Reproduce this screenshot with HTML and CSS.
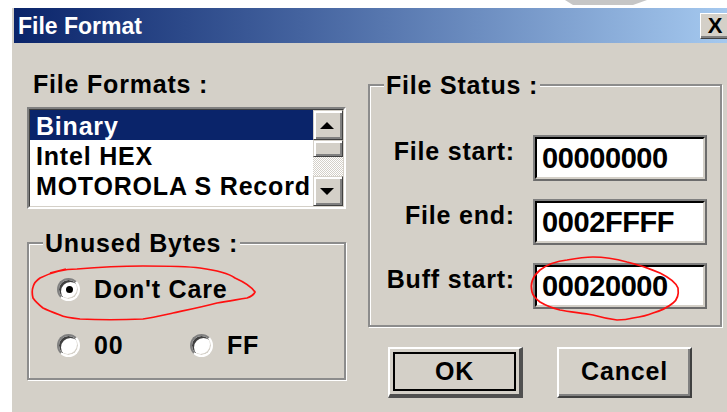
FILE: index.html
```html
<!DOCTYPE html>
<html lang="en">
<head>
<meta charset="utf-8">
<title>File Format</title>
<link rel="stylesheet" href="styles.css">
</head>
<body>
  <div class="backdrop">
    <svg width="90" height="8" viewBox="0 0 90 8"><polygon points="0,0 82,0 68,5 8,5" fill="#c6c6c6"/></svg>
  </div>

  <div class="window">
    <div class="titlebar">
      <span class="title">File Format</span>
      <span class="close">X</span>
    </div>

    <div class="content">
      <div class="col-left">
        <div class="label">File Formats :</div>
        <div class="listbox">
          <div class="listbox-inner">
            <ul class="items">
              <li class="sel">Binary</li>
              <li>Intel HEX</li>
              <li>MOTOROLA S Record</li>
            </ul>
            <div class="scrollbar">
              <div class="sb-btn"><i class="arrow-up"></i></div>
              <div class="sb-thumb"></div>
              <div class="sb-track"></div>
              <div class="sb-btn"><i class="arrow-down"></i></div>
            </div>
          </div>
        </div>

        <fieldset class="group unused">
          <legend>Unused Bytes :</legend>
          <div class="radio-row first">
            <label class="radio"><span class="circle checked"></span>Don't Care</label>
          </div>
          <div class="radio-row second">
            <label class="radio wide"><span class="circle"></span>00</label>
            <label class="radio"><span class="circle"></span>FF</label>
          </div>
        </fieldset>
      </div>

      <div class="col-right">
        <fieldset class="group status">
          <legend>File Status :</legend>
          <div class="field">
            <span class="flabel">File start:</span>
            <div class="edit"><div class="edit-inner">00000000</div></div>
          </div>
          <div class="field">
            <span class="flabel">File end:</span>
            <div class="edit"><div class="edit-inner">0002FFFF</div></div>
          </div>
          <div class="field">
            <span class="flabel">Buff start:</span>
            <div class="edit"><div class="edit-inner">00020000</div></div>
          </div>
        </fieldset>

        <div class="buttons">
          <div class="btn default"><div class="btn-face">OK</div></div>
          <div class="btn"><div class="btn-face">Cancel</div></div>
        </div>
      </div>
    </div>
  </div>

  <!-- hand-drawn red marks over the selected option and the buffer address -->
  <svg class="marks" width="727" height="412" viewBox="0 0 727 412">
    <path d="M40 278 C52 272 64 269 77 269 C100 267 120 266 143 266 C165 266 185 266 200 268 C215 270 228 273 235 278 C244 282 251 286 255 292 C253 296 250 297 247 298 C235 300 228 301 217 303 C202 307 187 310 173 313 C160 316 152 318 143 319 C120 320 100 320 80 319 C70 318 64 317 60 315 C52 312 47 310 43 308 C38 304 35 301 33 298 C32 294 32 290 33 287 C34 283 37 280 40 278 Z M50 273 L66 269" fill="none" stroke="#ff1010" stroke-width="1.7"/>
    <path d="M532 292 C530 284 533 276 540 270 C548 264 557 261 567 260 C578 258 586 257 593 257 C605 257 616 259 627 262 C640 265 651 269 660 273 C670 278 676 283 678 288 C679 295 677 300 673 303 C667 308 660 311 653 313 C646 316 640 317 633 318 C626 320 621 320 617 320 C610 319 600 317 593 315 C582 313 570 312 560 310 C552 308 545 305 540 302 C536 299 533 296 532 292 Z" fill="none" stroke="#ff1010" stroke-width="1.7"/>
  </svg>
</body>
</html>
```

FILE: styles.css
```css
html, body {
  margin: 0;
  background: #fff;
  overflow: hidden;
}

body {
  position: relative;
  width: 727px;
  height: 412px;
  font-family: "Liberation Sans", Arial, sans-serif;
  font-weight: bold;
  color: #000;
}

/* sliver of the window behind, above the dialog */
.backdrop {
  height: 8px;
}
.backdrop svg {
  display: block;
  margin-left: 565px;
}

.window {
  margin-left: 12px;
  width: 720px;
  height: 404px;
  background: #d4d0c8;
}

/* ---------- title bar ---------- */
.titlebar {
  margin-left: 2px;
  height: 35px;
  display: flex;
  align-items: center;
  justify-content: space-between;
  background: linear-gradient(90deg, #0a246a 0%, #44639f 40%, #a6caf0 100%);
}
.title {
  color: #fff;
  font-size: 23px;
  line-height: 35px;
  padding: 2px 0 0 4px;
}
.close {
  width: 30px;
  height: 26px;
  margin-right: 2px;
  box-sizing: border-box;
  border: 1px solid;
  border-color: #fff #404040 #404040 #fff;
  box-shadow: inset -2px -2px 0 #808080;
  background: #d4d0c8;
  font-size: 22px;
  line-height: 24px;
  text-align: center;
}

/* ---------- dialog body ---------- */
.content {
  display: grid;
  grid-template-columns: 319px 354px;
  column-gap: 22px;
  padding: 27px 0 0 15px;
}

.label {
  padding-left: 6px;
  font-size: 25px;
  line-height: 28px;
  letter-spacing: 0.8px;
}

/* ---------- list box ---------- */
.listbox {
  margin-top: 9px;
  height: 102px;
  box-sizing: border-box;
  border: 2px solid;
  border-color: #808080 #fff #fff #808080;
}
.listbox-inner {
  height: 100%;
  box-sizing: border-box;
  border: 1px solid;
  border-color: #404040 #d4d0c8 #d4d0c8 #404040;
  background: #fff;
  display: flex;
}
.items {
  list-style: none;
  margin: 0;
  padding: 0;
  flex: 1;
  min-width: 0;
  overflow: hidden;
}
.items li {
  height: 30px;
  box-sizing: border-box;
  padding: 2px 0 0 6px;
  font-size: 25px;
  line-height: 28px;
  letter-spacing: 0.8px;
  white-space: nowrap;
}
.items li.sel {
  background: #0a246a;
  color: #fff;
}

.scrollbar {
  width: 30px;
  display: flex;
  flex-direction: column;
}
.sb-btn,
.sb-thumb {
  box-sizing: border-box;
  border: 1px solid;
  border-color: #d4d0c8 #404040 #404040 #d4d0c8;
  box-shadow: inset 2px 2px 0 #fff, inset -2px -2px 0 #808080;
  background: #d4d0c8;
}
.sb-btn {
  height: 30px;
  display: flex;
  align-items: center;
  justify-content: center;
}
.sb-thumb {
  height: 17px;
}
.sb-track {
  flex: 1;
  background: repeating-conic-gradient(#fff 0 25%, #d4d0c8 0 50%) 0 0 / 2px 2px;
}
.arrow-up,
.arrow-down {
  width: 0;
  height: 0;
  margin-right: 3px;
  border-left: 7px solid transparent;
  border-right: 7px solid transparent;
}
.arrow-up {
  border-bottom: 7px solid #000;
}
.arrow-down {
  border-top: 7px solid #000;
}

/* ---------- group boxes ---------- */
.group {
  margin: 0;
  padding: 0;
  min-width: 0;
  box-sizing: border-box;
  border: 2px solid #8c8c8c;
  box-shadow: 1px 1px 0 #fff, inset 1px 1px 0 #fff;
}
.group legend {
  margin-left: 14px;
  padding: 0 2px;
  font-size: 25px;
  line-height: 28px;
  letter-spacing: 0.8px;
  background: #d4d0c8;
}

.unused {
  margin-top: 20px;
  height: 151px;
}
.radio-row {
  display: flex;
  align-items: center;
  height: 30px;
  padding-left: 28px;
}
.radio-row.first {
  margin-top: 17px;
}
.radio-row.second {
  margin-top: 26px;
}
.radio {
  display: flex;
  align-items: center;
  gap: 14px;
  font-size: 25px;
  line-height: 30px;
  letter-spacing: 0.8px;
}
.radio.wide {
  width: 133px;
}
.circle {
  position: relative;
  width: 23px;
  height: 23px;
  box-sizing: border-box;
  border-radius: 50%;
  border: 2px solid;
  border-color: #808080 #fff #fff #808080;
  box-shadow: inset 2px 2px 0 #404040, inset -1px -1px 0 #d4d0c8;
  background: #fff;
}
.circle.checked::after {
  content: "";
  position: absolute;
  left: 50%;
  top: 50%;
  width: 7px;
  height: 7px;
  margin: -3px 0 0 -3px;
  border-radius: 50%;
  background: #000;
}

/* ---------- file status ---------- */
.status {
  margin-top: 1px;
  height: 256px;
  padding: 36px 13px 0 0;
}
.field {
  display: flex;
  justify-content: flex-end;
  align-items: flex-start;
  height: 46px;
  margin-bottom: 18px;
}
.flabel {
  margin: 2px 18px 0 0;
  font-size: 25px;
  line-height: 28px;
  letter-spacing: 0.8px;
}
.edit {
  width: 174px;
  height: 46px;
  box-sizing: border-box;
  border: 2px solid;
  border-color: #808080 #6c6c6c #6c6c6c #808080;
}
.edit-inner {
  height: 100%;
  box-sizing: border-box;
  border: 2px solid;
  border-color: #000 #d4d0c8 #d4d0c8 #000;
  background: #fff;
  padding-left: 5px;
  font-size: 29px;
  line-height: 39px;
  letter-spacing: -0.4px;
}

/* ---------- push buttons ---------- */
.buttons {
  display: flex;
  gap: 34px;
  margin-top: 20px;
  padding-left: 20px;
}
.btn {
  width: 135px;
  height: 51px;
  box-sizing: border-box;
  border: 2px solid;
  border-color: #fff #404040 #404040 #fff;
  box-shadow: inset -2px -2px 0 #808080;
  background: #d4d0c8;
  display: flex;
}
.btn-face {
  flex: 1;
  display: flex;
  align-items: center;
  justify-content: center;
  padding-bottom: 3px;
  font-size: 25px;
  letter-spacing: 0.8px;
}
.btn.default {
  border-width: 2px 4px 4px 2px;
  border-color: #fff #505050 #505050 #fff;
  box-shadow: none;
  padding: 3px;
}
.btn.default .btn-face {
  border: 2px solid #000;
  padding-bottom: 0;
}

/* annotation layer */
.marks {
  position: absolute;
  left: 0;
  top: 0;
  pointer-events: none;
}
```
